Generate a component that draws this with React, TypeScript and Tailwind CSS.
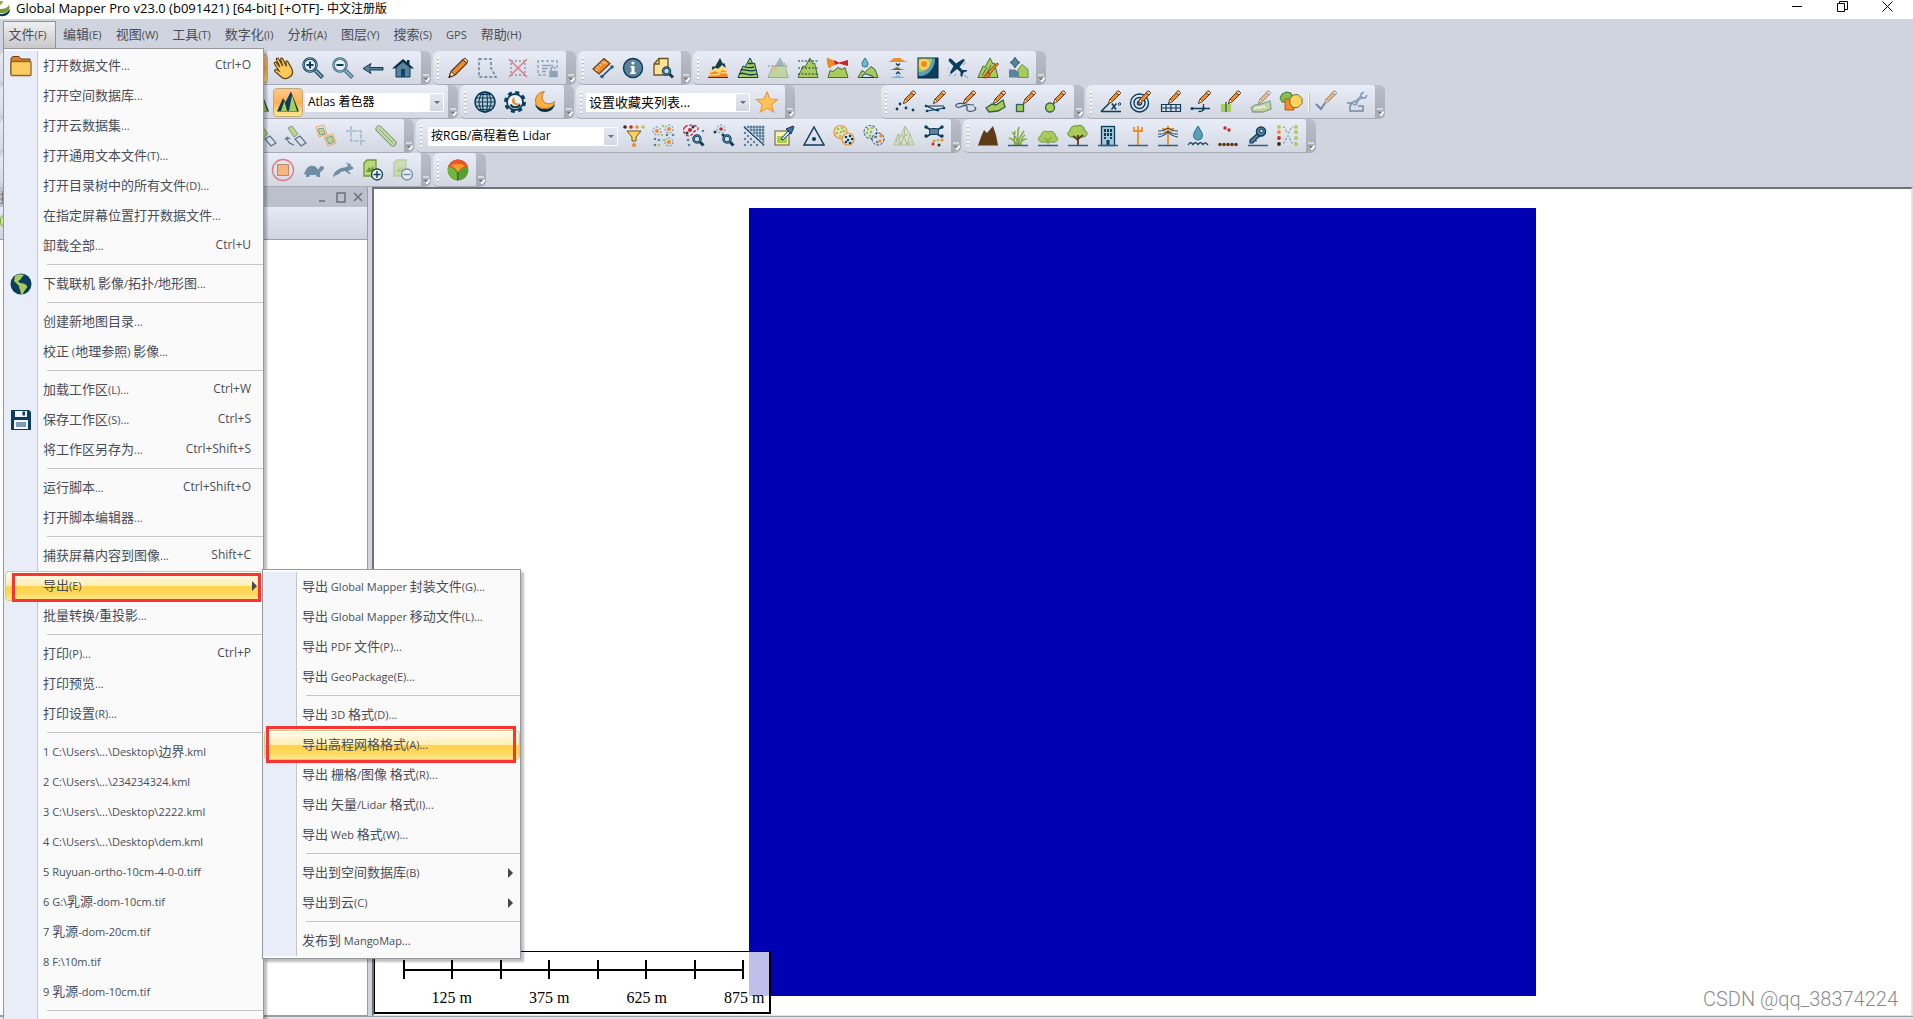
import type { ReactNode } from "react"

const NAVY = "#0b3d5c"
const STEEL = "#5b8299"
const GREEN = "#a8cb5a"
const ORANGE = "#f08c28"
const RED = "#cc2229"

const MOUNTAIN = "M2 21.5L7 10l2 1 5-9 3 6 1.500-1L22 21.5z"

const Pencil = () => (
  <g strokeLinejoin="round">
    <path d="M9.5 13.5l1.5-4.5 7-7 2.5 2.5-7 7z" fill={ORANGE} stroke="#5c3a1e" />
    <path d="M17 2.5l1.5-1.500h1.5l1.5 1.5v1L20 5z" fill="#f5c9a4" stroke="#5c3a1e" />
    <path d="M11 9l2.5 2.5-4 2z" fill="#ffe2a8" stroke="#5c3a1e" strokeWidth="0.7" />
  </g>
)

const Lens = ({ x, y }: { x: number; y: number }) => (
  <g fill="none">
    <path d={`M${x + 2} ${y + 2}l4.5 4.5`} stroke={NAVY} strokeWidth="3" />
    <circle cx={x} cy={y} r="3.5" stroke={NAVY} strokeWidth="2.5" fill="#cfe0ea" />
    <circle cx={x} cy={y} r="3.5" stroke={STEEL} />
  </g>
)

const dots = (list: number[][], fill: string, r = 1.3) =>
  list.map(([x, y]) => <circle key={`${x}-${y}`} cx={x} cy={y} r={r} fill={fill} />)

const Base = () => <path d="M2 21.5h20" stroke="#2f6288" strokeWidth="1.5" />

const icons: Record<string, ReactNode> = {
  hand: (
    <path
      d="M11 21.5c-2-1.5-4.5-4-6.5-5.5-2-1.6-.5-3 1.2-2.2l2.3 1.2L3.5 8c-.8-1.6 1-2.4 1.9-1.1L9 11 5.5 4c-.7-1.7 1.2-2.5 2.2-1l4 7-2-6.5c-.4-1.6 1.5-2 2.2-.5l3.5 7.5-.5-4.5c0-1.5 1.7-1.5 2.2 0 .8 2.5 3.5 5 4.4 9 .5 2.5-1 5-3.5 6.5-2 1.2-5 1.5-7 0z"
      fill="#ffc95c"
      stroke="#5c4416"
      strokeWidth="1.2"
    />
  ),
  zoomIn: (
    <g fill="none">
      <path d="M14.5 14.5l7 7" stroke={NAVY} strokeWidth="4" />
      <path d="M14.5 14.5l6.5 6.5" stroke="#7fa3b8" strokeWidth="2" />
      <circle cx="9" cy="9" r="6.5" fill="#e9eff7" stroke={NAVY} strokeWidth="2.5" />
      <circle cx="9" cy="9" r="6.5" stroke="#7fa3b8" />
      <path d="M9 5.5v7M5.5 9h7" stroke={NAVY} strokeWidth="2" />
    </g>
  ),
  zoomOut: (
    <g fill="none">
      <path d="M14.5 14.5l7 7" stroke="#3f6a85" strokeWidth="4" />
      <path d="M14.5 14.5l6.5 6.5" stroke="#8fadbf" strokeWidth="2" />
      <circle cx="9" cy="9" r="6.5" fill="#e9eff7" stroke="#3f6a85" strokeWidth="2.5" />
      <circle cx="9" cy="9" r="6.5" stroke="#8fadbf" />
      <path d="M5.5 9h7" stroke={NAVY} strokeWidth="2" />
    </g>
  ),
  back: <path d="M2 12.5l8-5-1.5 4H22v2.500H8.5l1.5 3.5z" fill={STEEL} stroke={NAVY} />,
  home: (
    <g>
      <path d="M5 11v10h14V11l-7-6z" fill={STEEL} stroke={NAVY} />
      <path d="M1 12.5L12 3l4 3.2V4h2.5v4.5L23 12.500h-3L12 6l-8 6.5z" fill="#072f47" />
      <path d="M10 21v-8h4v8z" fill="#0b4a70" />
    </g>
  ),
  pencil: (
    <g strokeLinejoin="round">
      <path d="M3 21.5l2-6L17 3.5l4 3.5L9 19z" fill={ORANGE} stroke="#5c3a1e" strokeWidth="1.2" />
      <path d="M5 15.5L9 19l-6 2.5z" fill="#ffe2a8" stroke="#5c3a1e" />
      <path d="M17 3.5l2-1.5 3 3-1.5 2z" fill="#f5c9a4" stroke="#5c3a1e" />
      <path d="M3 21.5l.8-2.5 1.7 1.5z" fill="#222" />
    </g>
  ),
  selectArea: (
    <path d="M3 3h12v9l5 9H3z" fill="none" stroke="#3d6490" strokeWidth="1.5" strokeDasharray="3 2" opacity="0.8" />
  ),
  clearSelection: (
    <g fill="none">
      <rect x="5" y="5" width="14" height="14" stroke="#7f9bb5" strokeWidth="1.5" strokeDasharray="2 2" />
      <path d="M3 3l18 18M21 3L3 21" stroke="#e07a84" strokeWidth="1.5" />
    </g>
  ),
  lockSelection: (
    <g fill="none" stroke="#8ba3b9" strokeWidth="1.5">
      <path d="M21 12V5H2v14h9" strokeDasharray="3 2" />
      <path d="M6 9.500h11M6 12.500h6M6 15.500h4" />
      <rect x="14" y="15.5" width="7" height="5" fill="#8ba3b9" />
      <path d="M15 15v-2c0-2.5 4-2.5 4 0" />
    </g>
  ),
  measure: (
    <g>
      <path d="M2 13L13 2.5l6 5L8 18z" fill={ORANGE} stroke="#6b4115" strokeWidth="1.2" />
      <path d="M6 10.5l2 2M8.5 8l2 2M11 5.5l2 2M4.5 13l2 2M13.5 6l1.5 1.5" stroke="#fff" />
      <path d="M11 20.5L21 11" stroke={NAVY} strokeWidth="1.3" />
      <circle cx="11" cy="20.5" r="1.8" fill="#2b5f8c" />
      <circle cx="21" cy="11" r="1.8" fill="#2b5f8c" />
    </g>
  ),
  info: (
    <g>
      <circle cx="12" cy="12" r="9.5" fill={STEEL} stroke={NAVY} strokeWidth="1.5" />
      <circle cx="12" cy="7" r="1.6" fill="#fff" />
      <path d="M9.5 10h4v6.500h1.5v1.500h-6v-1.500h1.5v-5H9.5z" fill="#fff" />
    </g>
  ),
  search: (
    <g>
      <path d="M3 19V8l5-5.500h9V19z" fill="#ffe19a" stroke="#6b5320" strokeWidth="1.3" />
      <path d="M3 8h5V2.5" fill="none" stroke="#6b5320" strokeWidth="1.3" />
      <Lens x={15.5} y={15} />
    </g>
  ),
  terrain: (
    <g>
      <path d={MOUNTAIN} fill={ORANGE} />
      <path d="M5 14l2-4 2 1 5-9 3 6 1.500-1 2.500 9-4-2-4 3-4-2-5 2z" fill="#ffd97a" />
      <path d="M6 12l1-2 2 1 5-9 3 6 1.500-1 1.300 5-3.800-3-3.500 3.500L9 12l-3 2z" fill={NAVY} />
      <path d="M2 20c4-3 7 0 11-2 3-2 5-2 8-1" fill="none" stroke="#ffd97a" strokeWidth="1.5" />
      <path d="M2 21.5h20" stroke={NAVY} />
    </g>
  ),
  contours: (
    <g fill="none">
      <path d={MOUNTAIN} fill={GREEN} stroke={NAVY} />
      <path d="M3 18c5-3 8 3 18 0M4.5 14c4-2 8 3 15.5 0M9 11c3 1 5 1 9 0M12 7.500h4.5" stroke={NAVY} strokeWidth="1.3" />
    </g>
  ),
  slice: (
    <g opacity="0.5">
      <path d={MOUNTAIN} fill={GREEN} stroke="#5d7d5a" />
      <path d="M10.5 10L14 2l3.5 8z" fill={STEEL} />
      <path d="M7 10h5l-2.5 6z" fill={ORANGE} />
      <path d="M2 10h20" stroke={NAVY} strokeDasharray="2 1.5" />
    </g>
  ),
  levels: (
    <g>
      <path d={MOUNTAIN} fill={GREEN} stroke="#4c6b3b" />
      <path d="M2 5h20M2 12h20M2 18h20" stroke={NAVY} strokeDasharray="2 1.5" />
    </g>
  ),
  lineOfSight: (
    <g>
      <path d="M2 21.5l2-7 3 1 5-4 4 2 3-2 3 10z" fill={GREEN} stroke="#4c6b3b" />
      <path d="M1 1.5l11 5-9 6c-2-3-2.5-7-2-11z" fill={ORANGE} />
      <path d="M8 4l5 2.5L22 4v6l-9-2.5L9 9z" fill={RED} />
    </g>
  ),
  watershed: (
    <g>
      <path d="M2 21.5l4-7 3 2 6-6 4 3 3 8z" fill={GREEN} stroke="#3d6340" />
      <path d="M6 21.5c1-4 4-4 6-3s4 1 6 3z" fill="#cfe5ee" stroke={NAVY} />
      <path d="M9 2c2 3 3 4.500 3 6a3 3 0 01-6 0c0-1.500 1-3 3-6z" fill="#74b9cf" stroke="#2f6f8a" />
    </g>
  ),
  compare: (
    <g>
      <path d="M2 6c4-1 4-4 7-4 2 1 3-1 5 0s3 3 8 4z" fill={ORANGE} />
      <path d="M2 14c5 0 6-2 9-3 3 1 4 3 11 3z" fill="#5d7a33" />
      <path d="M2 22c5 0 6-2 10-2.500 3 .5 5 2.500 10 2.500z" fill="#74b9cf" />
      <path d="M10 7.5l2 2 2-2M10 18l2-2 2 2" fill="none" stroke={NAVY} strokeWidth="1.3" />
    </g>
  ),
  heat: (
    <g>
      <rect x="2" y="2" width="20" height="20" fill={NAVY} />
      <path d="M2 2h17c1 8-6 17-13 18H2z" fill="#5f9db4" />
      <path d="M2 2h14c0 8-5 14-14 14z" fill={GREEN} />
      <circle cx="8" cy="8" r="5.5" fill="#ffd35e" />
      <circle cx="8" cy="8" r="3" fill={ORANGE} />
      <rect x="2" y="2" width="20" height="20" fill="none" stroke="#0a2b40" />
    </g>
  ),
  fly: (
    <g>
      <path
        d="M3 3c1-1 2.500 0 3.500 1L10 7.500l7-4.500 2 1-5.500 7 3 3h4l1 1-4 1.500L16 21l-1.500-1v-4l-3.500-3-6 5-1-1.500L7.500 10 4 6.500C3 5.500 2 4 3 3z"
        fill={NAVY}
      />
      <path d="M3 12l-1 1M5 18l-2 2M10 18l-2 2M17 9l3-3M18 19l4 3" stroke="#7ea0b5" />
    </g>
  ),
  paint: (
    <g>
      <path d={MOUNTAIN} fill={GREEN} stroke="#4c6b3b" />
      <path d="M6 20l5-9M9 21l6-12" stroke="#4c6b3b" />
      <path d="M12 16L21 7l1.5 1L14 18z" fill={ORANGE} stroke="#6b3b15" strokeWidth="0.8" />
      <path d="M7 21.5c2 0 2-5 5.500-5l1.500 2c0 3-4 4-7 3z" fill="#e8702a" stroke="#6b3b15" strokeWidth="0.8" />
    </g>
  ),
  shift: (
    <g>
      <path d="M12 21.500v-8l4-5 6 5v8z" fill={GREEN} stroke="#6d8f45" />
      <path d="M3 21.500v-8h6l4 3v5z" fill={STEEL} />
      <path d="M9 1.500v10M4 6.500h10" stroke="#2f5673" strokeWidth="1.5" />
      <path d="M9 1.500l4 5-4 5-4-5z" fill={STEEL} stroke="#2f5673" />
    </g>
  ),
  shader: (
    <g strokeLinejoin="round">
      <path d="M1 21.5L7 8l2.500 4L15 1.500l8 20z" fill={NAVY} />
      <path d="M5 21l3.500-10L11 21zM13 21l3-16L21 21z" fill={GREEN} />
    </g>
  ),
  globe: (
    <g fill="none" stroke={NAVY} strokeWidth="1.1">
      <circle cx="12" cy="12" r="10" fill="#b7cad6" strokeWidth="1.5" />
      <ellipse cx="12" cy="12" rx="6" ry="10" />
      <ellipse cx="12" cy="12" rx="2.5" ry="10" />
      <path d="M2 12h20M3 8h18M3 16h18M6 4.500h12M6 19.500h12" />
    </g>
  ),
  gear: (
    <g>
      <circle cx="12" cy="12" r="9.5" fill="none" stroke={NAVY} strokeWidth="3" strokeDasharray="4 3.46" />
      <circle cx="12" cy="12" r="8" fill="#f3f5fa" stroke={NAVY} strokeWidth="1.8" />
      <path d="M7.500 14.500a5 4 0 009.500 0" fill="none" stroke={NAVY} strokeWidth="2" />
      <path d="M11.500 7a4.200 4.200 0 105.500 5.500c-2.500 2-5.500.5-5.500-2.500 0-1.200 0-2 0-3z" fill={ORANGE} />
    </g>
  ),
  moon: (
    <g>
      <path d="M2 14c1 4.500 5 8 10 8s9-3 10-8c-3 3.500-6 5-10 5s-8-2-10-5z" fill="#072f47" />
      <path
        d="M11.500 1.500C6 2 2 6 2.500 11.500 3 16 7 18.500 12 18.500c5 0 9-2.500 9.500-7-3 3-8 3-10.500.5-2.500-3-2.500-7 .5-10.500z"
        fill="#fbb040"
        stroke="#b8641a"
        strokeWidth="0.8"
      />
    </g>
  ),
  star: (
    <path
      d="M12 2l3 7 7.500.6-5.800 4.900 1.900 7.500-6.600-4.100L5.400 22l1.900-7.500L1.500 9.600 9 9z"
      fill="#ffc35c"
      stroke="#f39a3c"
      strokeWidth="1.2"
    />
  ),
  addPoint: (
    <g>
      <Pencil />
      {dots([[6, 14], [3, 19], [12, 18], [19, 20]], NAVY, 1.4)}
    </g>
  ),
  addLine: (
    <g>
      <path d="M2 16h18M2 16l12 5M3 21l18-3" fill="none" stroke={NAVY} strokeWidth="1.2" />
      {dots([[2, 16], [3, 21], [20, 18], [14, 20]], NAVY, 1.3)}
      <Pencil />
    </g>
  ),
  addCurve: (
    <g>
      <path d="M20 15c-8 0-12-3-17-1-3 2 0 4 3 3 5-2 8-2 7 1s2 4 6 3c3-1 4-3 1-4" fill="none" stroke="#2f5673" strokeWidth="1.2" />
      <Pencil />
    </g>
  ),
  addArea: (
    <g>
      <path d="M2 18l6-4 4 1 7-5 2 7-7 4-9 1z" fill={GREEN} stroke="#2f6240" strokeWidth="1.3" />
      <Pencil />
    </g>
  ),
  addRect: (
    <g>
      <rect x="2.5" y="14.5" width="7" height="7" fill={GREEN} stroke="#2f6262" strokeWidth="1.3" />
      <Pencil />
    </g>
  ),
  addCircle: (
    <g>
      <circle cx="6" cy="17.5" r="4.5" fill="#a6d148" stroke="#2f6262" strokeWidth="1.3" />
      <Pencil />
    </g>
  ),
  addAngle: (
    <g>
      <path d="M2 21.5h20M2 21.5l9-9" stroke={NAVY} strokeWidth="1.5" />
      <path d="M13 13.5l4 6M17.5 13.5l-5 6" stroke={NAVY} strokeWidth="1.5" />
      <circle cx="20.5" cy="14" r="1.2" fill="none" stroke={NAVY} />
      <Pencil />
    </g>
  ),
  rangeRing: (
    <g>
      <g fill="none" stroke={NAVY} strokeWidth="1.4">
        <circle cx="10.5" cy="13" r="9" />
        <circle cx="10.5" cy="13" r="5.5" />
        <circle cx="10.5" cy="13" r="2" />
      </g>
      <Pencil />
    </g>
  ),
  grid: (
    <g>
      <path d="M2.5 14.500h19v7h-19zM2.5 18h19M7 14.500v7M12 14.500v7M17 14.500v7" fill="none" stroke={NAVY} strokeWidth="1.2" />
      <Pencil />
    </g>
  ),
  snap: (
    <g>
      <path d="M3 18.5h18M14.5 14v5c0 2-2 2.500-5 2.500" fill="none" stroke={NAVY} strokeWidth="1.3" />
      {dots([[3, 18.5], [14.5, 18.5]], NAVY, 1.5)}
      <Pencil />
    </g>
  ),
  split: (
    <g>
      <path d="M2 14h4v8H2zM8 14h4v8H8z" fill="#a6d148" />
      <path d="M7 12v10" stroke={NAVY} strokeWidth="1.2" />
      <Pencil />
    </g>
  ),
  reshape: (
    <g opacity="0.5">
      <path d="M2 18l4-3 6-1 9-3 1 8-8 3H4z" fill={GREEN} stroke="#2f6240" strokeWidth="1.3" />
      <path d="M5 19c3-3 6 0 8-2s3 1 4 1" fill="none" stroke="#fff" strokeWidth="1.5" />
      <Pencil />
    </g>
  ),
  combine: (
    <g>
      <path d="M3 4l4-2 5 1 1 5-3 4-7 0-2-4z" fill="#86bf4d" stroke="#3f7a35" />
      <path d="M6 9h9v11H6z" fill={ORANGE} stroke="#b35c14" />
      <path d="M14 5l5-.500 4 4v5l-4 4h-5l-3-4v-5z" fill="#ffd45c" stroke="#7a6a2a" />
    </g>
  ),
  finish: (
    <g opacity="0.55">
      <path d="M1 14l5 5 4-6" fill="none" stroke={NAVY} strokeWidth="1.8" />
      <Pencil />
    </g>
  ),
  settings: (
    <g opacity="0.5" fill="none">
      <path d="M2 13h5l-2 3v5h13v-5h-5" stroke={NAVY} strokeWidth="1.5" />
      <path d="M10 13l7-7" stroke="#2f6288" strokeWidth="3" />
      <circle cx="10" cy="13" r="2" stroke="#2f6288" strokeWidth="1.5" />
      <path d="M19 2l-3 2v4h4l2-3" stroke="#2f6288" strokeWidth="1.8" />
    </g>
  ),
  rotate: (
    <g opacity="0.65">
      <path d="M4 4l4-2 6 8-4 3z" fill={GREEN} stroke="#4f7a45" />
      <path d="M11 15l5-3 6 7-5 3z" fill="none" stroke={NAVY} strokeWidth="1.2" />
      <path d="M3 13c0 4 3 7 7 8M3 13l-2 3M3 13l3 2" fill="none" stroke={NAVY} strokeWidth="1.2" />
    </g>
  ),
  move: (
    <g opacity="0.65">
      <path d="M2 3l8-2 3 9-8 3z" fill="none" stroke={ORANGE} />
      <path d="M4 5l5-1 2 6-5 1z" fill={GREEN} stroke="#4f7a45" />
      <path d="M10 13l9-3 3 9-8 3z" fill="none" stroke={ORANGE} />
      <path d="M12 14l6-2 2 6-5 2z" fill={GREEN} stroke="#4f7a45" />
    </g>
  ),
  crop: <path d="M7 2v15h15M2 7h15v15" fill="none" stroke="#a3bbcd" strokeWidth="1.6" strokeDasharray="5 1" />,
  buffer: (
    <g opacity="0.65" strokeLinecap="round">
      <path d="M5 5l14 14" stroke="#4f7a45" strokeWidth="7" />
      <path d="M5 5l14 14" stroke="#b9d878" strokeWidth="5" />
      <path d="M5 5l14 14" stroke="#4f7a45" />
    </g>
  ),
  filter: (
    <g>
      {dots([[3, 3]], "#3f2a1a", 1.8)}
      {dots([[9, 3]], RED, 1.8)}
      {dots([[15, 3]], ORANGE, 1.8)}
      {dots([[21, 3]], GREEN, 1.8)}
      <path d="M5 7h14l-5 6v4h-4v-4z" fill="#ffd45c" stroke="#6b5320" />
      {dots([[12, 21]], ORANGE, 2)}
    </g>
  ),
  classify: (
    <g>
      {dots([[5, 7], [17, 5], [17, 18]], ORANGE, 2)}
      <g fill="none" stroke={STEEL} strokeDasharray="2 1.5">
        <circle cx="5" cy="7" r="4" />
        <circle cx="17" cy="5" r="4" />
        <circle cx="17" cy="18" r="4" />
      </g>
      {dots([[11, 2], [10, 11], [12, 16], [7, 21]], GREEN)}
      {dots([[3, 15], [7, 16], [3, 21], [21, 11], [15, 11]], STEEL)}
    </g>
  ),
  queryRed: (
    <g>
      <path d="M3 3c4-3 12-2 13 1s-4 2-5 5-6 4-8 1-2-5 0-7z" fill="none" stroke={RED} strokeWidth="1.3" strokeDasharray="3 1.5" />
      {dots([[8, 6]], RED, 2)}
      {dots([[5, 9], [11, 3]], NAVY, 1.5)}
      {dots([[6, 16], [7, 21], [21, 7]], STEEL)}
      <Lens x={15} y={15} />
    </g>
  ),
  queryPoint: (
    <g>
      <circle cx="9" cy="5" r="4" fill="none" stroke={STEEL} strokeDasharray="2 1.5" />
      {dots([[9, 5]], RED, 1.8)}
      {dots([[3, 8], [11, 11]], NAVY, 1.5)}
      <Lens x={15} y={15} />
    </g>
  ),
  thin: (
    <g>
      {[3, 6, 9, 12, 15, 18, 21].map((y) =>
        [3, 6, 9, 12, 15, 18, 21].map((x) =>
          x > y || (x + y) % 2 === 0 ? <circle key={`${x}-${y}`} cx={x} cy={y} r={x > y ? 1.5 : 1.2} fill={STEEL} /> : null
        )
      )}
      <path d="M2 3l20 18" stroke="#e2e6f0" strokeWidth="3" />
      <path d="M2 3l20 18" stroke={NAVY} strokeWidth="1.3" />
    </g>
  ),
  pickColor: (
    <g>
      <rect x="3" y="7" width="14" height="14" fill="#f7efc4" stroke="#6b5b30" />
      <path d="M5 12h10v7H5z" fill="#a6d148" />
      <path d="M9 15l7-8 2 2-7 7z" fill="#d7e3ee" stroke={NAVY} />
      <path d="M14 5l5 5 3-7-1-1z" fill="#3f6f96" stroke={NAVY} />
    </g>
  ),
  tin: (
    <g>
      <path d="M12 3L22 21H2z" fill="none" stroke={NAVY} strokeWidth="1.5" />
      {dots([[12, 15]], NAVY, 2)}
    </g>
  ),
  segment: (
    <g>
      <circle cx="8.5" cy="8" r="6.5" fill="#f1eed8" stroke={ORANGE} strokeWidth="1.2" />
      <circle cx="16" cy="15" r="6" fill="#dfe8ef" stroke={ORANGE} strokeWidth="1.2" />
      {dots([[6, 5], [10, 4], [5, 9], [9, 8], [8, 12], [12, 7]], "#9cc24a", 1.5)}
      {dots([[14, 13], [18, 12], [20, 15], [16, 16], [14, 18], [18, 19]], NAVY, 1.3)}
    </g>
  ),
  cluster: (
    <g>
      <circle cx="8.5" cy="8" r="6.5" fill="none" stroke={NAVY} strokeDasharray="2.5 1.5" />
      <circle cx="16" cy="15" r="6" fill="none" stroke={NAVY} strokeDasharray="2.5 1.5" />
      {dots([[6, 5], [10, 4], [5, 9], [9, 8], [8, 12]], "#9cc24a", 1.4)}
      {dots([[19, 12], [18, 17]], ORANGE, 1.7)}
      {dots([[14, 13], [15, 18]], STEEL)}
    </g>
  ),
  mesh: (
    <g opacity="0.55">
      <path d="M2 21L6 10l2.500 2L13 2l5 8 4 11z" fill="#d9e6b8" stroke="#8aa95a" />
      <path d="M6 10l3 11 3-9 3 9 3-11M8.500 12L4 17l5 4M13 2l-1 10 4-2-4 2-3.500 0M20 17l-5 4" fill="none" stroke="#7d9f4c" />
    </g>
  ),
  drone: (
    <g>
      <path d="M4 3l16 10M20 3L4 13" stroke={NAVY} strokeWidth="2" />
      <rect x="7.5" y="4.5" width="9" height="6" rx="2" fill={STEEL} stroke={NAVY} />
      {dots([[4, 3], [20, 3], [4, 12], [20, 12]], NAVY, 1.7)}
      {dots([[12, 17], [20, 16]], ORANGE, 1.5)}
      {dots([[16, 16]], GREEN, 1.5)}
      {dots([[11, 20]], RED, 1.5)}
      {dots([[17, 21]], "#3f2a1a", 1.5)}
    </g>
  ),
  ground: <path d="M2 21.5L5 13l3-7 3 3 6-7 3 9 2 10.500z" fill="#5d3a18" />,
  grass: (
    <g fill="none" stroke="#7fab3e" strokeWidth="1.5">
      <path d="M12 21c0-8-1-13 1-18M12 21c-1-7-3-10-6-13M12 21c1-7 3-10 6-14M11 21c-2-4-4-6-8-7M13 21c2-4 4-6 8-6M9 21c-1-3-1-8 0-14M15 21c0-4 1-8 4-10" />
      <Base />
    </g>
  ),
  bush: (
    <g>
      <path d="M6 18c-4 0-5-5-1-6 0-4 4-6 7-4 4-2 8 1 7 4 4 1 3 6-1 6z" fill={GREEN} stroke="#6f9a3a" />
      <path d="M12 21v-6M8 14l3 2M16 13l-3 3" stroke="#6f9a3a" />
      <Base />
    </g>
  ),
  tree: (
    <g>
      <path d="M5 13c-4-1-4-5-1-6 0-4 4-6 7-5 4-2 8 1 7 4 4 1 4 6 0 7z" fill={GREEN} stroke="#5f8a34" />
      <path d="M12 21V11M12 16l-5-4M12 15l5-4" stroke="#5d3a18" strokeWidth="1.8" />
      <Base />
    </g>
  ),
  building: (
    <g>
      <rect x="5.5" y="2.5" width="13" height="19" fill="#a9c6d8" stroke={NAVY} strokeWidth="1.3" />
      {[5, 9].map((y) => [8, 11, 14].map((x) => <rect key={`${x}-${y}`} x={x} y={y} width="2" height="3" fill={NAVY} />))}
      <path d="M8 13h2v2H8zM14 13h2v2h-2zM10.500 16h3v5.500h-3z" fill={NAVY} />
      <Base />
    </g>
  ),
  pole: (
    <g fill="none" stroke={ORANGE} strokeWidth="1.8">
      <path d="M12 2v19M8 3v4h8V3" />
      <Base />
    </g>
  ),
  powerLine: (
    <g fill="none">
      <path d="M12 2v19M6 5h12M8 8h8" stroke={ORANGE} strokeWidth="1.8" />
      <path d="M2 7c5 0 8-1 10-3 2 2 5 3 10 3M2 10c5 0 8 0 10-3 2 3 5 3 10 3M2 13c5-1 8-2 10-5 2 3 5 4 10 5" stroke={NAVY} strokeWidth="0.9" />
      <Base />
    </g>
  ),
  water: (
    <g>
      <path d="M12 2c3 5 4.500 7 4.500 9.500a4.500 4.500 0 01-9 0C7.500 9 9 7 12 2z" fill="#57a0b8" stroke="#2f6f8a" />
      <path d="M2 21c2-3 3-3 5-.5 2-2.500 3-2.500 5 0 2-2.500 3-2.500 5 0 2-2.500 3-2 5 .5" fill="none" stroke={NAVY} strokeWidth="1.3" />
    </g>
  ),
  noise: (
    <g>
      {dots([[9, 4], [13, 6]], RED, 1.7)}
      {dots([[4, 20.5], [8, 20.5], [12, 20.5], [16, 20.5], [20, 20.5]], "#5d3a18", 1.8)}
    </g>
  ),
  key: (
    <g>
      <path d="M12 9l-8 7v3l3 0 1-2 2 0 0-2 4-3z" fill={STEEL} stroke={NAVY} strokeWidth="1.2" />
      <circle cx="15" cy="7.5" r="4.5" fill={STEEL} stroke={NAVY} strokeWidth="1.5" />
      <circle cx="15.5" cy="7" r="1.8" fill="#dfe6ef" stroke={NAVY} />
      <Base />
    </g>
  ),
  remap: (
    <g>
      {dots([[3, 3]], GREEN, 1.9)}
      {dots([[3, 8]], ORANGE, 1.9)}
      {dots([[3, 14]], RED, 1.9)}
      {dots([[3, 20]], "#3f2a1a", 1.9)}
      {dots([[20, 3], [20, 8], [20, 14], [20, 20]], GREEN, 1.9)}
      <path d="M7 3c4 0 2 6 5 6s1-6 5-6M7 19c4 0 2-7 5-7s1 7 5 7" fill="none" stroke="#6b8ba0" strokeDasharray="2.5 1.5" />
    </g>
  ),
  stop: (
    <g>
      <circle cx="12" cy="12" r="10.5" fill="none" stroke="#dd7d86" strokeWidth="1.4" />
      <rect x="6.5" y="6.5" width="11" height="11" fill="#f6b57a" stroke="#b98a70" />
    </g>
  ),
  turtle: (
    <path d="M2 17c2-1 2-7 7-9 4-1 7 1 8 4l2-3c1-2 4-1 4 1-1 3-3 3-4 5l0 4h-3l-1-2H9l-1 2H5l0-3z" fill="#6f8da3" />
  ),
  rabbit: (
    <path d="M2 20c0-4 2-7 6-9 3-2 7-1 9-3l-2-4 3 2 1-1 1 3c2 1 3 2 2 3-2 1-4 1-5 2l3 3-2 0-4-3-4 1c-2 1-2 3-5 3-1 1-2 1-3 3z" fill="#6f8da3" />
  ),
  addMap: (
    <g>
      <path d="M3 18V5l3-3h9v16z" fill="#b9d878" stroke="#6f9a3a" strokeWidth="1.3" />
      <path d="M5 14l3-5 2 2 2-3 2 6z" fill="#6f9a3a" />
      <circle cx="16" cy="16.5" r="5.5" fill="#eef2f8" stroke={NAVY} strokeWidth="1.3" />
      <path d="M16 13v7M12.500 16.500h7" stroke={NAVY} strokeWidth="1.4" />
    </g>
  ),
  removeMap: (
    <g opacity="0.5">
      <path d="M3 18V5l3-3h9v16z" fill="#b9d878" stroke="#8fb35a" strokeWidth="1.3" />
      <path d="M5 14l3-5 2 2 2-3 2 6z" fill="#8fb35a" />
      <circle cx="16" cy="16.5" r="5.5" fill="#eef2f8" stroke={NAVY} strokeWidth="1.3" />
      <path d="M12.500 16.500h7" stroke={NAVY} strokeWidth="1.4" />
    </g>
  ),
  mango: (
    <g>
      <circle cx="12" cy="12" r="10.5" fill="#5a9e32" />
      <path d="M2 8.500C4 4 8 1.500 12 1.500S20 4 22 8.500c-4 0-7 2-10 6-2-4-5-6-10-6z" fill="#f0502c" />
      <path d="M5 8c4-3 10-3 14 0-3 1-5 3-7 6-2-3-4-5-7-6z" fill="#fa9a28" />
      <path d="M2 9c6 1 9 4 9.500 13C4 21 1 15 2 9z" fill="#74b63c" />
      <path d="M12 14c0 4 0 6-.5 8.500" fill="none" stroke="#2c6b1e" strokeWidth="1.3" />
    </g>
  ),
  folder: (
    <g>
      <path d="M2 20V4l2-1.500h6L12 5h9v3H2z" fill="#dd7f28" stroke="#6b4115" />
      <rect x="2" y="7.5" width="20" height="14" rx="1" fill="#ffcb62" stroke="#8a6a2c" strokeWidth="1.3" />
    </g>
  ),
  earth: (
    <g>
      <circle cx="12" cy="12" r="10.5" fill={NAVY} />
      <path d="M6 4c3-2 6-2 9-1l-2 2-2 3-2 1 2 2c3 0 6 1 7 3s-3 4-4 8l-2 0c0-3-2-5-2-8L5 9z" fill={GREEN} />
    </g>
  ),
  save: (
    <g>
      <path d="M2 2h18l2 2v18H2z" fill={NAVY} />
      <path d="M6 3h12v6H6zM5 12h14v9H5z" fill="#f2f5f9" />
      <path d="M13.500 3.500h2.500v4h-2.500z" fill={NAVY} />
      <path d="M7 14h10v5H7z" fill="#7f9db0" />
    </g>
  ),
}

const Icon = ({ name }: { name: string }) => (
  <svg viewBox="0 0 24 24" className="h-6 w-6" aria-hidden="true">
    {icons[name]}
  </svg>
)

// Latin runs are set smaller than the Chinese ones
const Label = ({ text }: { text: string }) => (
  <span className="whitespace-pre">
    {text.split(/([\u4e00-\u9fff]+)/).map((part, i) =>
      i % 2 ? (
        <span key={i} className="text-[13px]">{part}</span>
      ) : (
        <span key={i} className="text-[11px]">{part}</span>
      )
    )}
  </span>
)

const Tool = ({ name, active }: { name: string; active?: boolean }) => (
  <button
    aria-label={name}
    className={
      active
        ? "flex h-[29px] w-[30px] items-center justify-center rounded-sm border border-[#c2a877] bg-linear-to-b from-[#fcc98f] via-[#ffb04e] to-[#ffe98e]"
        : "flex h-[29px] w-[30px] items-center justify-center"
    }
  >
    <Icon name={name} />
  </button>
)

const Tools = ({ names }: { names: string[] }) => (
  <>
    {names.map((name) => (
      <Tool key={name} name={name} />
    ))}
  </>
)

const Strip = ({ className = "pr-[3px]", grip = true, children }: { className?: string; grip?: boolean; children: ReactNode }) => (
  <div className="flex h-[34px] shrink-0 overflow-hidden rounded-md border-b border-[#a9acb5]">
    <div className={`flex items-center rounded-r-sm bg-linear-to-b from-[#e9edf7] to-[#d3d7e1] pt-px ${className}`}>
      {grip && (
        <div className="flex w-[10px] justify-center">
          <div className="h-[23px] w-[2px] bg-[repeating-linear-gradient(#ffffff_0_2px,#b4b8c2_2px_3px,transparent_3px_4px)]" />
        </div>
      )}
      {children}
    </div>
    <div className="flex w-[10px] items-end justify-center bg-linear-to-b from-[#b9bec8] to-[#a7abb5] pb-[2px]">
      <svg viewBox="0 0 8 8" className="h-2 w-2" aria-hidden="true">
        <path d="M1 1h6M2 4h6L5 8z" stroke="#fff" fill="#fff" />
        <path d="M1 3.500h5.500l-2.700 3z" fill="#777" />
      </svg>
    </div>
  </div>
)

const Combo = ({ label, value, className }: { label: string; value: string; className: string }) => (
  <div className={`relative h-[19px] bg-white ${className}`}>
    <select aria-label={label} className="h-full w-full appearance-none bg-transparent pl-[3px] leading-[18px] text-black outline-none">
      <option>{value}</option>
    </select>
    <span className="pointer-events-none absolute top-px right-px bottom-px flex w-[13px] items-center justify-center bg-linear-to-b from-[#e6e9f2] to-[#d3d7e1]">
      <span className="border-x-3 border-t-3 border-x-transparent border-t-[#6b6e78]" />
    </span>
  </div>
)

type Entry = { text: string; keys?: string; icon?: string; more?: boolean; hot?: boolean } | null

const fileMenu: Entry[] = [
  { text: "打开数据文件...", keys: "Ctrl+O", icon: "folder" },
  { text: "打开空间数据库..." },
  { text: "打开云数据集..." },
  { text: "打开通用文本文件(T)..." },
  { text: "打开目录树中的所有文件(D)..." },
  { text: "在指定屏幕位置打开数据文件..." },
  { text: "卸载全部...", keys: "Ctrl+U" },
  null,
  { text: "下载联机 影像/拓扑/地形图...", icon: "earth" },
  null,
  { text: "创建新地图目录..." },
  { text: "校正 (地理参照) 影像..." },
  null,
  { text: "加载工作区(L)...", keys: "Ctrl+W" },
  { text: "保存工作区(S)...", keys: "Ctrl+S", icon: "save" },
  { text: "将工作区另存为...", keys: "Ctrl+Shift+S" },
  null,
  { text: "运行脚本...", keys: "Ctrl+Shift+O" },
  { text: "打开脚本编辑器..." },
  null,
  { text: "捕获屏幕内容到图像...", keys: "Shift+C" },
  { text: "导出(E)", more: true, hot: true },
  { text: "批量转换/重投影..." },
  null,
  { text: "打印(P)...", keys: "Ctrl+P" },
  { text: "打印预览..." },
  { text: "打印设置(R)..." },
  null,
  { text: "1 C:\\Users\\...\\Desktop\\边界.kml" },
  { text: "2 C:\\Users\\...\\234234324.kml" },
  { text: "3 C:\\Users\\...\\Desktop\\2222.kml" },
  { text: "4 C:\\Users\\...\\Desktop\\dem.kml" },
  { text: "5 Ruyuan-ortho-10cm-4-0-0.tiff" },
  { text: "6 G:\\乳源-dom-10cm.tif" },
  { text: "7 乳源-dom-20cm.tif" },
  { text: "8 F:\\10m.tif" },
  { text: "9 乳源-dom-10cm.tif" },
  null,
]

const exportMenu: Entry[] = [
  { text: "导出 Global Mapper 封装文件(G)..." },
  { text: "导出 Global Mapper 移动文件(L)..." },
  { text: "导出 PDF 文件(P)..." },
  { text: "导出 GeoPackage(E)..." },
  null,
  { text: "导出 3D 格式(D)..." },
  { text: "导出高程网格格式(A)...", hot: true },
  { text: "导出 栅格/图像 格式(R)..." },
  { text: "导出 矢量/Lidar 格式(I)..." },
  { text: "导出 Web 格式(W)..." },
  null,
  { text: "导出到空间数据库(B)", more: true },
  { text: "导出到云(C)", more: true },
  null,
  { text: "发布到 MangoMap..." },
]

const MenuList = ({ entries }: { entries: Entry[] }) => (
  <ul className="flex flex-col bg-[linear-gradient(90deg,#e8edf7_33px,#c5c5c5_33px,#c5c5c5_34px,#fafafa_34px)]">
    {entries.map((entry, i) =>
      entry ? (
        <li key={entry.text}>
          <button
            className={
              entry.hot
                ? "ml-[1px] flex h-[30px] w-[calc(100%-1px)] items-center rounded-sm border border-[#d9c98a] bg-[linear-gradient(#fffdf0,#ffeeb5_48%,#ffd34a_52%,#ffd75a_75%,#ffe98a)] pr-[10px] pl-[3px] text-left"
                : "flex h-[30px] w-full items-center pr-[12px] pl-[5px] text-left"
            }
          >
            <span className="flex w-[24px] shrink-0 justify-center">{entry.icon && <Icon name={entry.icon} />}</span>
            <span className="flex flex-1 items-center justify-between pb-[2px] pl-[10px]">
              <Label text={entry.text} />
              {entry.keys && <span className="text-[12px]">{entry.keys}</span>}
            </span>
            {entry.more && <span className="-mr-[5px] border-y-5 border-l-5 border-y-transparent border-l-[#3f4654]" />}
          </button>
        </li>
      ) : (
        <li key={i} className="flex h-2 items-start pt-[3px] pl-[43px]">
          <hr className="w-full border-[#c5c5c5]" />
        </li>
      )
    )}
  </ul>
)

const menus = ["编辑(E)", "视图(W)", "工具(T)", "数字化(I)", "分析(A)", "图层(Y)", "搜索(S)", "GPS", "帮助(H)"]

const TitleBar = () => (
  <header className="flex h-[19px] items-start justify-between overflow-hidden bg-white text-black">
    <div className="flex items-center">
      <svg viewBox="0 0 10 16" className="h-4 w-[10px]" aria-hidden="true">
        <path d="M0 8c4 0 7-1 9-4 2 5-2 9-9 8z" fill="#7d9a3a" />
        <path d="M0 13c5 0 8-2 10-5 0 5-4 8-10 7z" fill={NAVY} />
        <path d="M0 0h3L2 3 0 4z" fill="#8fae4a" />
      </svg>
      <h1 className="pl-[6px] text-[13px] leading-4">
        Global Mapper Pro v23.0 (b091421) [64-bit] [+OTF]- <span className="text-[12px]">中文注册版</span>
      </h1>
    </div>
    <div className="flex gap-[34px] pt-px pr-[20px]">
      <button aria-label="最小化">
        <svg viewBox="0 0 11 11" className="h-[11px] w-[11px]"><path d="M0 5.500h10" stroke="#000" /></svg>
      </button>
      <button aria-label="还原">
        <svg viewBox="0 0 11 11" className="h-[11px] w-[11px]"><path d="M.5 2.500h7v8h-7zM2.500 2.500v-2h8v8h-3" fill="none" stroke="#000" /></svg>
      </button>
      <button aria-label="关闭">
        <svg viewBox="0 0 11 11" className="h-[11px] w-[11px]"><path d="M.5.5l10 10M10.500.5l-10 10" stroke="#000" /></svg>
      </button>
    </div>
  </header>
)

const MenuBar = () => (
  <nav className="flex h-8 items-start pt-[2px] pl-[3px]">
    <button className="h-[28px] w-[53px] border border-[#8f9299] bg-linear-to-b from-[#f0f0f0] to-[#c8c8c8] pr-1 pb-[2px]">
      <Label text="文件(F)" />
    </button>
    {menus.map((menu) => (
      <button key={menu} className="h-[28px] px-[7px] pb-[2px]">
        <Label text={menu} />
      </button>
    ))}
  </nav>
)

const Toolbars = () => (
  <div className="flex flex-col">
    <div className="flex h-[34px] gap-[2px]">
      <Strip grip={false} className="w-[421px] justify-end pr-[3px]">
        <Tool name="zoomIn" active />
        <Tools names={["hand", "zoomIn", "zoomOut", "back", "home"]} />
      </Strip>
      <Strip><Tools names={["pencil", "selectArea", "clearSelection", "lockSelection"]} /></Strip>
      <Strip><Tools names={["measure", "info", "search"]} /></Strip>
      <Strip>
        <Tools names={["terrain", "contours", "slice", "levels", "lineOfSight", "watershed", "compare", "heat", "fly", "paint", "shift"]} />
      </Strip>
    </div>
    <div className="flex h-[34px] gap-[2px]">
      <Strip grip={false} className="w-[448px] justify-end pr-[4px]">
        <Tool name="shader" />
        <Tool name="shader" active />
        <Combo label="着色器" value="Atlas 着色器" className="ml-[2px] w-[139px] text-[12px]" />
      </Strip>
      <Strip className="pr-[4px]"><Tools names={["globe", "gear", "moon"]} /></Strip>
      <Strip>
        <Combo label="收藏夹" value="设置收藏夹列表..." className="mr-[2px] w-[164px] text-[13px]" />
        <Tool name="star" />
      </Strip>
      <div className="w-[82px] shrink-0" />
      <Strip><Tools names={["addPoint", "addLine", "addCurve", "addArea", "addRect", "addCircle"]} /></Strip>
      <Strip>
        <Tools names={["addAngle", "rangeRing", "grid", "snap", "split", "reshape", "combine"]} />
        <div className="mx-[2px] h-[18px] w-[2px] border-l border-white bg-[#b9bec8]" />
        <Tools names={["finish", "settings"]} />
      </Strip>
    </div>
    <div className="flex h-[34px] gap-[2px]">
      <Strip grip={false} className="w-[404px] justify-end pr-[3px]">
        <Tool name="rotate" />
        <Tools names={["rotate", "move", "crop", "buffer"]} />
      </Strip>
      <Strip className="pr-[2px]">
        <Combo label="Lidar" value="按RGB/高程着色 Lidar" className="mr-[1px] ml-[2px] w-[190px] text-[12px]" />
        <Tools names={["filter", "classify", "queryRed", "queryPoint", "thin", "pickColor", "tin", "segment", "cluster", "mesh", "drone"]} />
      </Strip>
      <Strip>
        <Tools names={["ground", "grass", "bush", "tree", "building", "pole", "powerLine", "water", "noise", "key", "remap"]} />
      </Strip>
    </div>
    <div className="flex h-[34px] gap-[2px]">
      <Strip grip={false} className="w-[421px] justify-end pr-[3px]">
        <Tools names={["stop", "turtle", "rabbit", "addMap", "removeMap"]} />
      </Strip>
      <Strip><Tools names={["mango"]} /></Strip>
    </div>
  </div>
)

const SidePanel = () => (
  <aside className="flex w-[368px] shrink-0 flex-col border-r border-b border-[#9a9da6] bg-white">
    <div className="flex h-5 items-center justify-between bg-[#bbc0ca] text-[#6e7078]">
      <Label text="控制中心" />
      <div className="flex gap-[7px] pr-[4px]">
        {["M0 9h6", "M1 1h8v9H1z", "M1 1l8 8M9 1L1 9"].map((d) => (
          <svg key={d} viewBox="0 0 10 11" className="h-[11px] w-[10px]" aria-hidden="true">
            <path d={d} fill="none" stroke="#6e7078" strokeWidth="1.5" />
          </svg>
        ))}
      </div>
    </div>
    <div className="h-[33px] border-b border-[#9a9da6] bg-linear-to-b from-[#e6eaf4] to-[#d0d4de] pt-2">
      <div className="h-3 w-3 rounded-sm border border-[#7fab3e] bg-[#cfe39c]" />
    </div>
  </aside>
)

const ScaleBar = () => (
  <div className="absolute bottom-px left-0 w-[397px] border-t border-r-2 border-b-2 border-l border-black bg-white/75 pt-2 pb-[5px] font-['Liberation_Serif',serif] text-black">
    <div className="mr-[25px] ml-[28px] flex h-[19px] items-center justify-between bg-[linear-gradient(#000,#000)] bg-[length:100%_2px] bg-center bg-no-repeat">
      {Array.from({ length: 8 }, (_, i) => (
        <div key={i} className="h-full w-[2px] bg-black" />
      ))}
    </div>
    <div className="ml-[28px] grid w-[390px] grid-cols-4 pt-[10px] text-center text-[16px] leading-[18px]">
      {["125 m", "375 m", "625 m", "875 m"].map((mark) => (
        <span key={mark}>{mark}</span>
      ))}
    </div>
  </div>
)

export default function App() {
  return (
    <div className="relative flex h-screen flex-col overflow-hidden bg-[#cfd4de] font-['Open_Sans','Noto_Sans_CJK_SC',sans-serif] leading-4 text-[#484d59]">
      <TitleBar />
      <MenuBar />
      <Toolbars />
      <div className="flex min-h-0 flex-1 gap-[4px]">
        <SidePanel />
        <main className="relative flex flex-1 items-center justify-center border-t-2 border-r-2 border-b border-l-2 border-t-[#6f727a] border-r-[#e3e3e6] border-b-[#e3e3e6] border-l-[#6f727a] bg-white">
          <div className="aspect-square h-[95.3%] bg-[#0000b2]" />
          <ScaleBar />
          <p className="absolute right-[13px] bottom-1 font-[Roboto,sans-serif] text-[20px] leading-6 font-light text-[#8c8c8c]">
            CSDN @qq_38374224
          </p>
        </main>
      </div>
      <footer className="h-[3px] border-t border-[#9a9da6] bg-[#e4e6ec]" />

      <div className="absolute top-12 bottom-0 left-[3px] w-[261px] border-x border-t border-[#97989b] bg-[#fafafa] pt-[2px] shadow-[3px_3px_2px_rgba(0,0,0,0.25)]">
        <MenuList entries={fileMenu} />
        <div className="h-8 bg-[linear-gradient(90deg,#e8edf7_33px,#c5c5c5_33px,#c5c5c5_34px,#fafafa_34px)]" />
      </div>
      <div className="absolute top-[569px] left-[262px] w-[259px] border border-[#97989b] bg-[#fafafa] py-[2px] shadow-[3px_3px_2px_rgba(0,0,0,0.25)]">
        <MenuList entries={exportMenu} />
      </div>

      <div className="pointer-events-none absolute top-[573px] left-[12px] h-[29px] w-[249px] border-3 border-[#fa3434]" />
      <div className="pointer-events-none absolute top-[726px] left-[266px] h-[37px] w-[250px] border-3 border-[#fa3434]" />
    </div>
  )
}
